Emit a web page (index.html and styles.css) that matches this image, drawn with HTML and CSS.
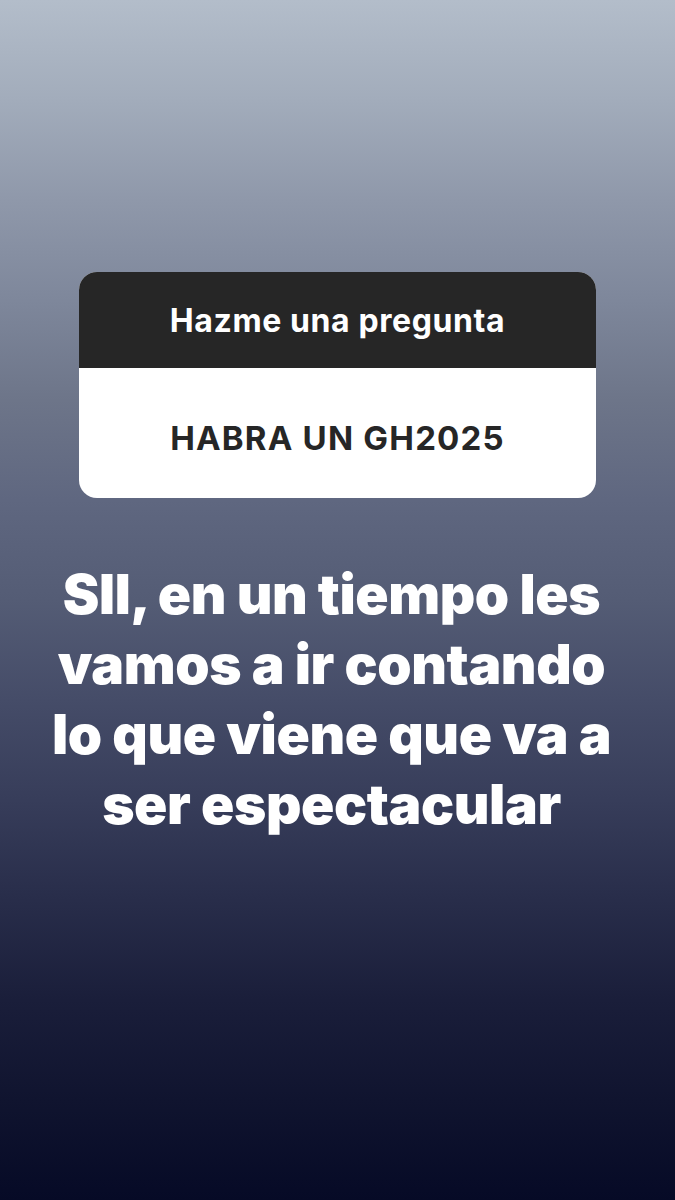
FILE: index.html
```html
<!DOCTYPE html>
<html lang="es">
<head>
<meta charset="utf-8">
<link rel="stylesheet" href="styles.css">
</head>
<body>
<main class="story">
  <section class="question-card">
    <div class="question-head">Hazme una pregunta</div>
    <div class="question-body">HABRA UN GH2025</div>
  </section>
  <p class="answer">SII, en un tiempo les<br>vamos a ir contando<br>lo que viene que va a<br>ser espectacular</p>
</main>
</body>
</html>
```
FILE: styles.css
```css
html, body {
  margin: 0;
  padding: 0;
}
body {
  width: 675px;
  height: 1200px;
  overflow: hidden;
  font-family: Inter, "Liberation Sans", sans-serif;
}
.story {
  height: 1200px;
  box-sizing: border-box;
  padding-top: 272px;
  display: flex;
  flex-direction: column;
  align-items: center;
  background: linear-gradient(180deg,
    #b3bdca 0px,
    #a2acbb 100px,
    #8f98aa 200px,
    #7e879b 300px,
    #6d7589 400px,
    #5f6780 500px,
    #545c75 600px,
    #454c68 700px,
    #373d5a 800px,
    #282d4a 900px,
    #1a1e3a 1000px,
    #10142f 1100px,
    #060a26 1200px);
}
.question-card {
  width: 517px;
  border-radius: 18px;
  overflow: hidden;
  background: #ffffff;
}
.question-head {
  height: 96px;
  background: #262626;
  color: #ffffff;
  font-weight: 700;
  font-size: 32px;
  display: flex;
  align-items: center;
  justify-content: center;
  letter-spacing: 0.6px;
}
.question-body {
  height: 130px;
  color: #262626;
  font-weight: 700;
  font-size: 33px;
  letter-spacing: 1.2px;
  display: flex;
  align-items: center;
  justify-content: center;
  padding-top: 10px;
  box-sizing: border-box;
}
.answer {
  margin: 61px 12px 0 0;
  color: #ffffff;
  font-weight: 900;
  font-size: 55px;
  line-height: 70px;
  text-align: center;
  letter-spacing: -0.4px;
}
```
